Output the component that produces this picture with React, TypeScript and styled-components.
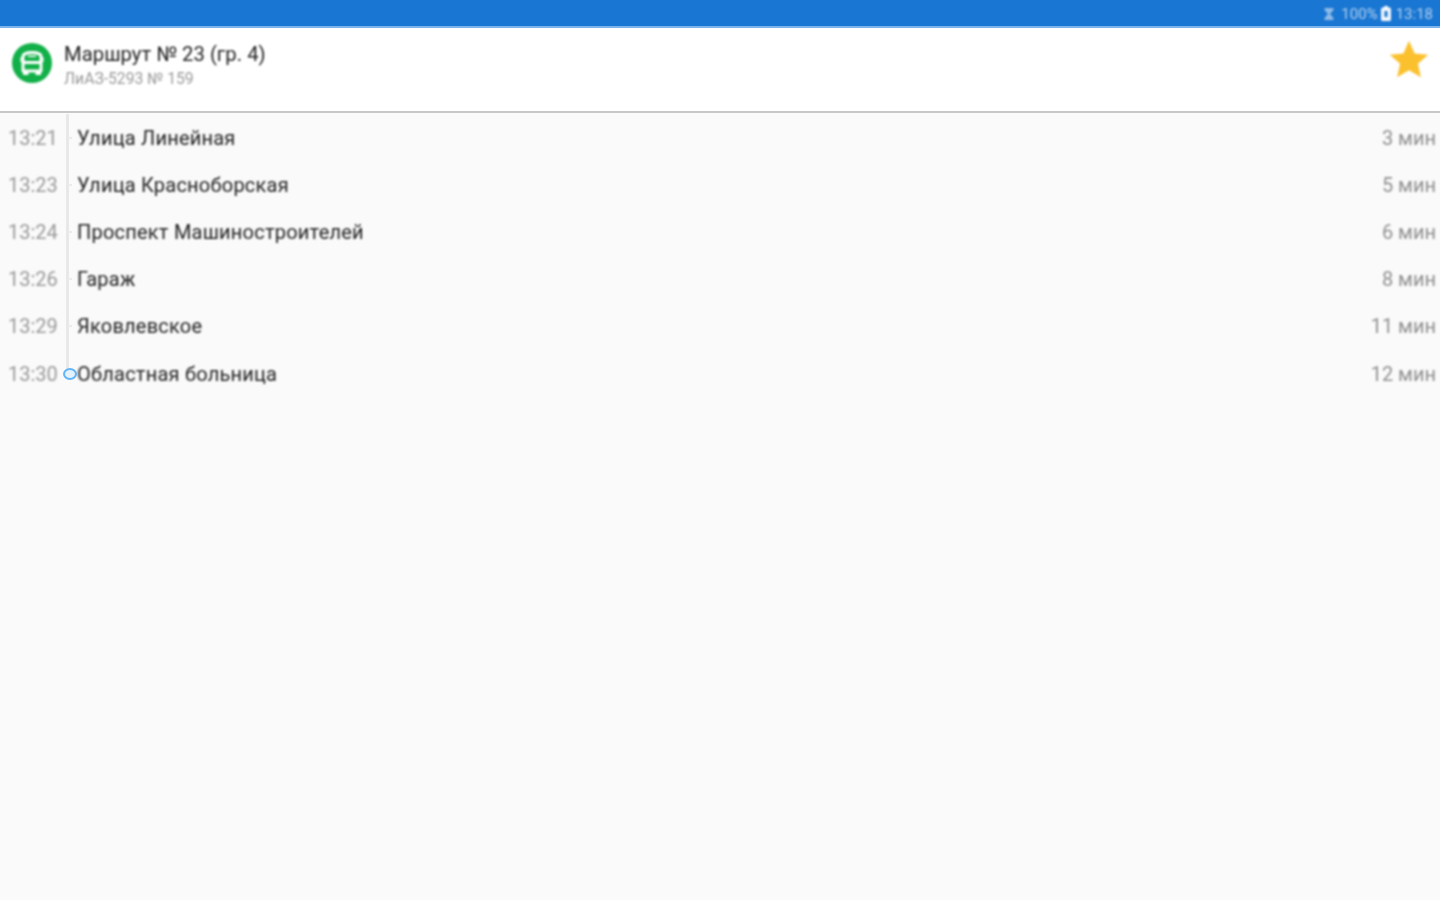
import React from "react";
import styled, { createGlobalStyle, css } from "styled-components";

const Global = createGlobalStyle`
  html, body { margin: 0; padding: 0; height: 100%; background: #fafafa; }
  #root { height: 100%; }
  * { box-sizing: border-box; }
`;

const soft = css`
  filter: blur(0.8px);
`;

const Screen = styled.div`
  width: 1440px;
  height: 900px;
  overflow: hidden;
  display: flex;
  flex-direction: column;
  background: #fafafa;
  font-family: Roboto, "Liberation Sans", sans-serif;
`;

const StatusBar = styled.div`
  height: 28px;
  flex: none;
  background: #1976d2;
  border-bottom: 2px solid #7db3ea;
  display: flex;
  align-items: center;
  justify-content: flex-end;
  padding: 1px 7px 0 0;
`;

const StatusContent = styled.div`
  ${soft}
  display: flex;
  align-items: center;
  gap: 5px;
  color: #b5d2f0;
  font-size: 15px;
`;

const StatusGroup = styled.span`
  display: flex;
  align-items: center;
  gap: 3px;
`;

const Header = styled.header`
  height: 85px;
  flex: none;
  background: #fff;
  border-bottom: 2px solid #c8c8c8;
  display: flex;
  align-items: flex-start;
  padding: 15px 12px 0 12px;
  gap: 12px;
`;

const Titles = styled.div`
  ${soft}
  flex: 1;
  display: flex;
  flex-direction: column;
  gap: 4px;
  margin-top: -1px;
`;

const Title = styled.div`
  font-size: 20.3px;
  line-height: 24px;
  color: #1f1f1f;
`;

const Subtitle = styled.div`
  font-size: 15.7px;
  line-height: 18px;
  color: #999;
`;

const BusWrap = styled.div`
  ${soft}
  flex: none;
  line-height: 0;
`;

const StarWrap = styled.div`
  ${soft}
  margin: -3px -1px 0 0;
  line-height: 0;
`;

const List = styled.div`
  flex: 1;
  display: flex;
  flex-direction: column;
  padding-top: 1px;
`;

const Row = styled.div`
  height: 47.2px;
  flex: none;
  display: grid;
  grid-template-columns: 62px 10px 1fr auto;
  align-items: center;
  padding-right: 4px;
  font-size: 20px;
`;

const Time = styled.div`
  ${soft}
  padding-left: 8px;
  color: #999;
  white-space: nowrap;
`;

const Rail = styled.div<{ $last?: boolean }>`
  position: relative;
  height: 100%;
  align-self: stretch;
  &::before {
    content: "";
    position: absolute;
    left: 4px;
    top: 0;
    width: 3px;
    height: ${(p) => (p.$last ? "50%" : "100%")};
    background: #e8e8e8;
  }
  &::after {
    content: "";
    position: absolute;
    top: 50%;
    left: ${(p) => (p.$last ? "1px" : "6px")};
    width: ${(p) => (p.$last ? "10px" : "4px")};
    height: ${(p) => (p.$last ? "8px" : "2px")};
    transform: translateY(-50%);
    border-radius: ${(p) => (p.$last ? "50%" : "0")};
    border: ${(p) => (p.$last ? "2.5px solid #64b5f6" : "none")};
    background: ${(p) => (p.$last ? "#e3f2fd" : "#ececec")};
    filter: blur(0.5px);
  }
`;

const Stop = styled.div`
  ${soft}
  padding-left: 5px;
  color: #1f1f1f;
  white-space: nowrap;
  letter-spacing: 0.22px;
`;

const Eta = styled.div`
  ${soft}
  color: #8f8f8f;
  white-space: nowrap;
`;

const stops = [
  ["13:21", "Улица Линейная", "3 мин"],
  ["13:23", "Улица Красноборская", "5 мин"],
  ["13:24", "Проспект Машиностроителей", "6 мин"],
  ["13:26", "Гараж", "8 мин"],
  ["13:29", "Яковлевское", "11 мин"],
  ["13:30", "Областная больница", "12 мин"],
];

const BusIcon = () => (
  <svg width="40" height="40" viewBox="0 0 40 40">
    <circle cx="20" cy="20" r="20" fill="#12b048" />
    <path
      fill="none"
      stroke="#fff"
      strokeWidth="3"
      strokeLinejoin="round"
      d="M11 13.500c0-2.500 4-4 9-4s9 1.500 9 4V28H11zM11 19.500h18"
    />
    <path fill="#fff" d="M8.500 14h2v5h-2zM29.500 14h2v5h-2zM11 27h5.500v5H11zM23.500 27H29v5h-5.500z" />
    <path fill="#fff" d="M16 12.500h8v1.600h-8z" />
  </svg>
);

const Star = () => (
  <svg width="40" height="38" viewBox="0 0 24 23">
    <path fill="#fbc02d" d="M12 .5l3.400 7.600 8.200.8-6.200 5.500 1.800 8.100L12 18.300l-7.200 4.200 1.800-8.100L.4 8.900l8.200-.8z" />
  </svg>
);

export default function App() {
  return (
    <Screen>
      <Global />
      <StatusBar>
        <StatusContent>
          <svg width="14" height="14" viewBox="0 0 14 14">
            <path fill="#8fbbe8" d="M2.500 1h9v2L8 7l3.500 4v2h-9v-2L6 7 2.500 3z" />
          </svg>
          <StatusGroup>
            100%
            <svg width="10" height="15" viewBox="0 0 10 15">
              <path fill="#f4f8fd" fillRule="evenodd" d="M3 0h4v1.500h1.500A1.500 1.500 0 0 1 10 3v10.500a1.500 1.500 0 0 1-1.500 1.500h-7A1.500 1.500 0 0 1 0 13.500V3a1.500 1.500 0 0 1 1.500-1.500H3zM3.500 5v6h3V5z" />
            </svg>
          </StatusGroup>
          <span>13:18</span>
        </StatusContent>
      </StatusBar>
      <Header>
        <BusWrap>
          <BusIcon />
        </BusWrap>
        <Titles>
          <Title>Маршрут № 23 (гр. 4)</Title>
          <Subtitle>ЛиАЗ-5293 № 159</Subtitle>
        </Titles>
        <StarWrap>
          <Star />
        </StarWrap>
      </Header>
      <List>
        {stops.map(([t, name, eta], i) => (
          <Row key={t}>
            <Time>{t}</Time>
            <Rail $last={i === stops.length - 1} />
            <Stop>{name}</Stop>
            <Eta>{eta}</Eta>
          </Row>
        ))}
      </List>
    </Screen>
  );
}
